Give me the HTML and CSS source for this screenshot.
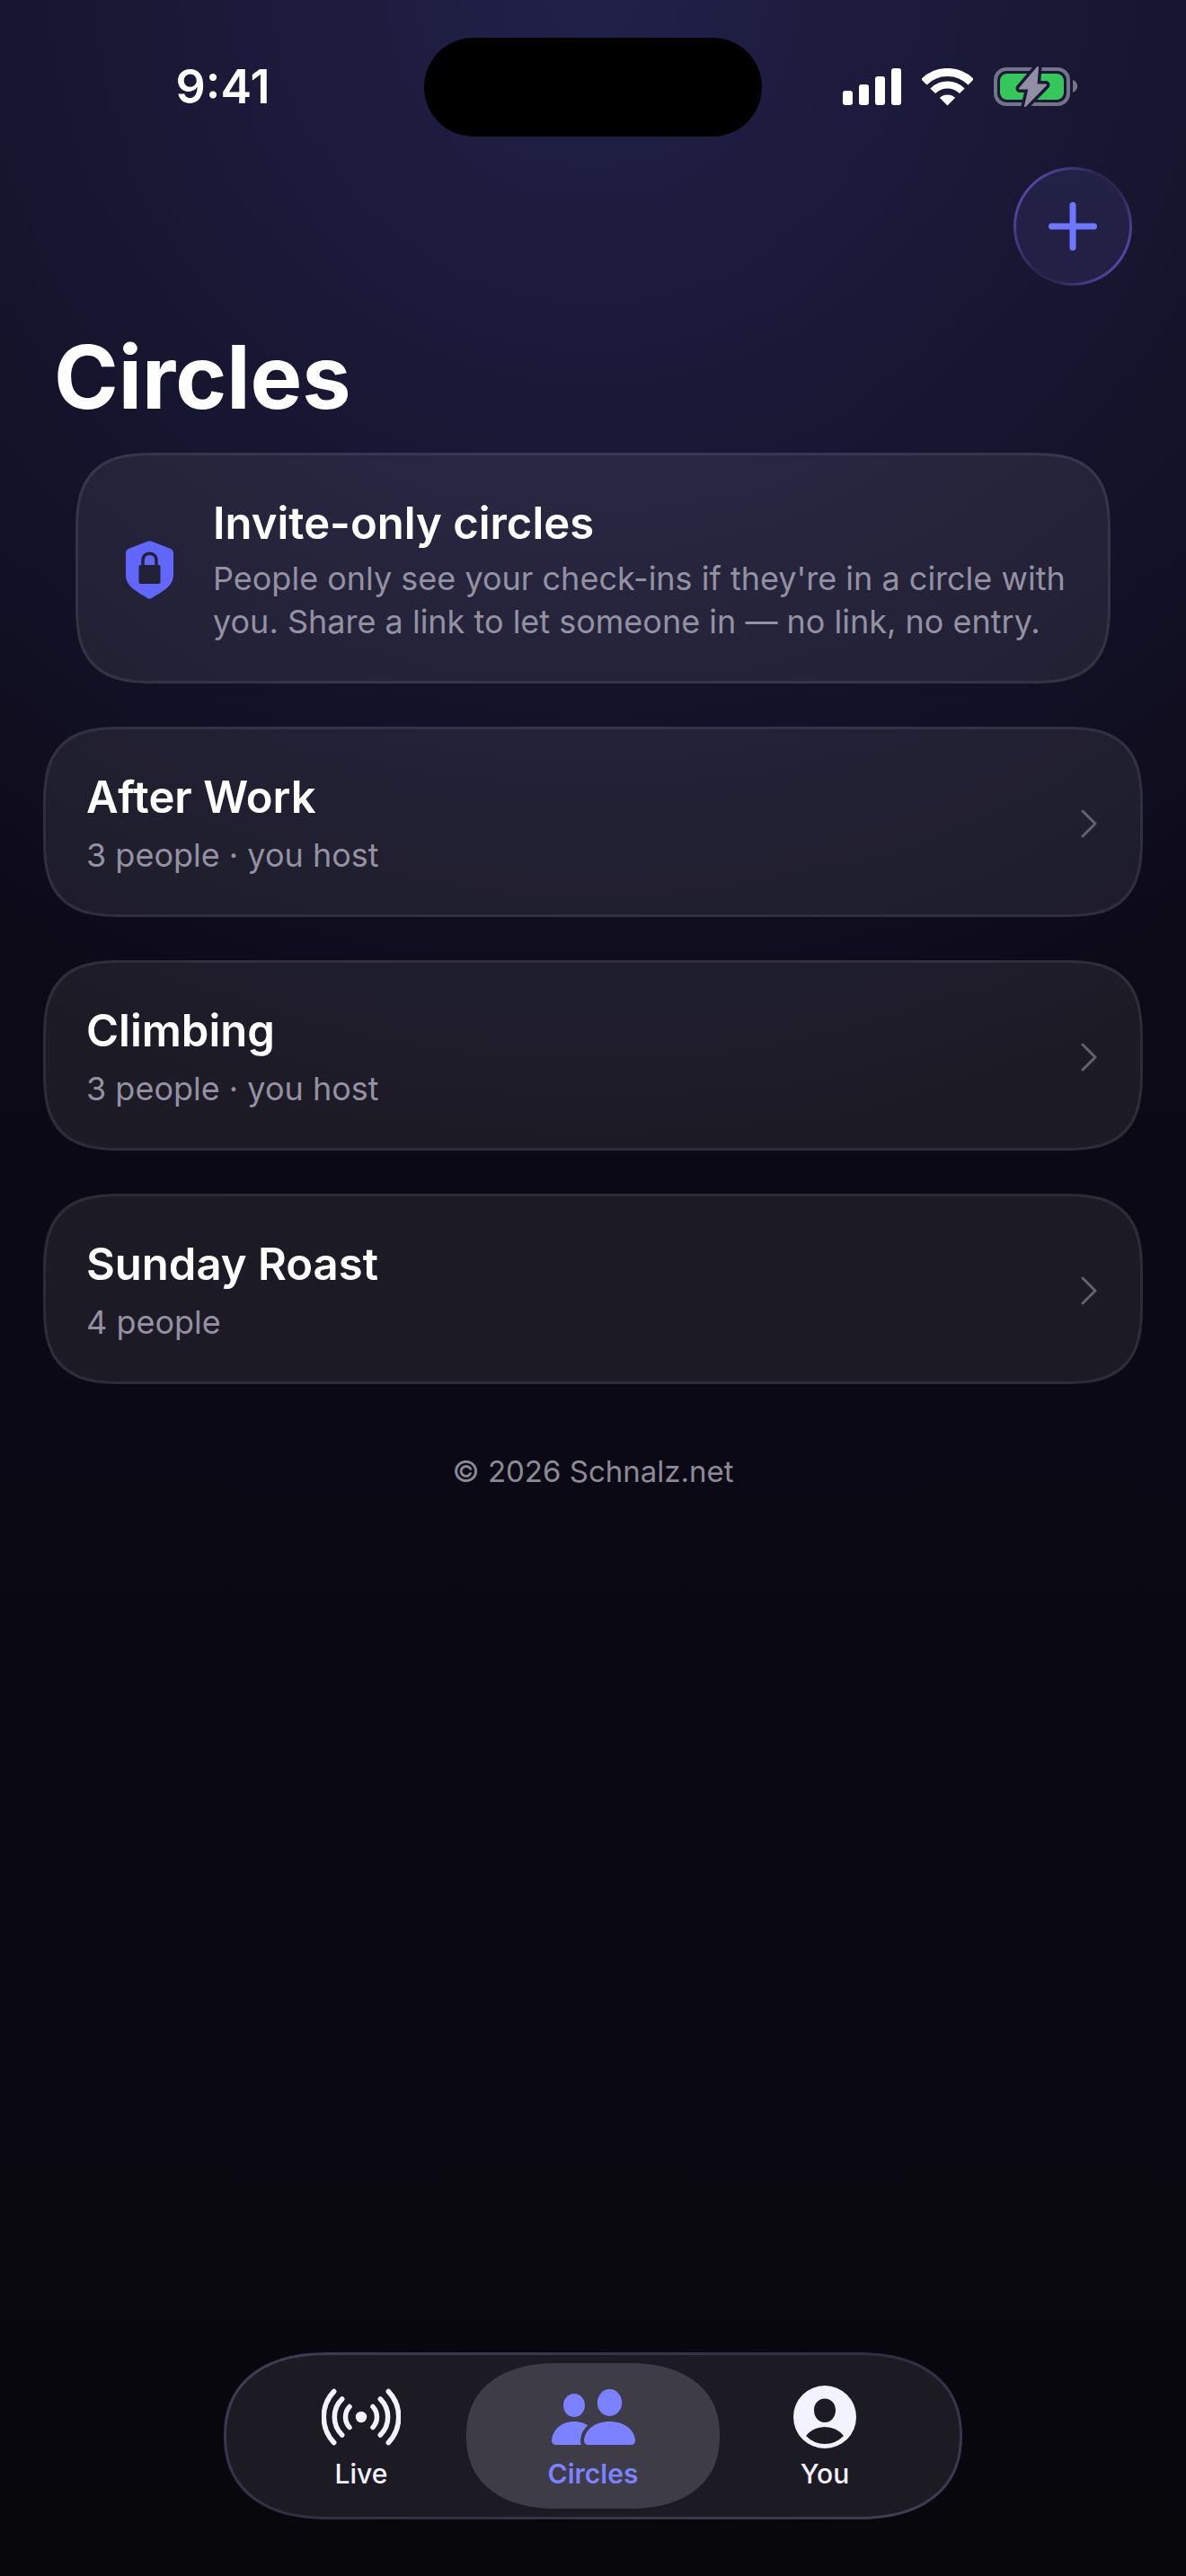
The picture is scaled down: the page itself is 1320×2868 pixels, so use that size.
FILE: index.html
```html
<!DOCTYPE html>
<html lang="en">

<head>
    <meta charset="UTF-8">
    <meta name="viewport" content="width=device-width, initial-scale=1.0">
    <title>Circles</title>
    <link rel="stylesheet" href="styles.css">
</head>

<body>
    <div class="status-bar">
        <div class="status-time">9:41</div>
        <div class="island"></div>
        <div class="status-icons">
            <svg class="signal" viewBox="0 0 65 42" aria-hidden="true">
                <rect x="0" y="25" width="11" height="16" rx="3" />
                <rect x="18" y="18" width="11" height="23" rx="3" />
                <rect x="36" y="9" width="11" height="32" rx="3" />
                <rect x="54" y="0" width="11" height="41" rx="3" />
            </svg>
            <svg class="wifi" viewBox="0 0 57 42" aria-hidden="true">
                <path d="M2.3 15.3A37 37 0 0 1 54.7 15.3" fill="none" stroke="#fff" stroke-width="9" />
                <path d="M12.2 25.2A23 23 0 0 1 44.8 25.2" fill="none" stroke="#fff" stroke-width="8" />
                <path d="M19.8 32.8A13 13 0 0 1 37.2 32.8L28.5 41.5Z" />
            </svg>
            <svg class="battery" viewBox="0 0 94 46" aria-hidden="true">
                <mask id="bolt-gap">
                    <rect width="94" height="46" fill="#fff" />
                    <path d="M49 1L29 24.500H39.500L35 44L58 20.500H47.500Z" fill="#000" stroke="#000" stroke-width="9" stroke-linejoin="round" />
                </mask>
                <g mask="url(#bolt-gap)">
                    <rect x="2" y="3" width="81" height="39" rx="12" fill="none" stroke="#757389" stroke-width="4" />
                    <rect x="7" y="8" width="71" height="29" rx="8" fill="#34c759" />
                </g>
                <path d="M49 1L29 24.500H39.500L35 44L58 20.500H47.500Z" fill="#918fa5" stroke="#918fa5" stroke-width="2" stroke-linejoin="round" />
                <path d="M88 15C95 18 95 26 88 29Z" fill="#757389" />
            </svg>
        </div>
    </div>

    <header class="header">
        <button class="add-button" aria-label="New circle">
            <svg viewBox="0 0 54 54" aria-hidden="true">
                <path d="M27 3.500V50.500M3.500 27H50.500" />
            </svg>
        </button>
        <h1>Circles</h1>
    </header>

    <main class="content">
        <section class="card info">
            <svg class="shield" viewBox="0 0 53 65" aria-hidden="true">
                <path d="M23.500 1Q26.500 -.500 29.500 1L50 9Q53 10.500 53 14V38C53 51 41 56 29 64Q26.500 65.500 24 64C12 56 0 51 0 38V14Q0 10.500 3 9Z" fill="#6067fa" />
                <path d="M19 28V22C19 11.500 34 11.500 34 22V28" fill="none" stroke="#232136" stroke-width="3.500" />
                <rect x="14.500" y="27" width="24" height="21" rx="2" fill="#232136" />
            </svg>
            <div>
                <h2>Invite-only circles</h2>
                <p>People only see your check-ins if they're in a circle with you. Share a link to let someone in — no link, no entry.</p>
            </div>
        </section>

        <a class="card circle" href="#after-work">
            <div>
                <h2>After Work</h2>
                <p>3 people · you host</p>
            </div>
            <svg class="chevron" viewBox="0 0 18 32" aria-hidden="true"><path d="M2 2L16 16L2 30" /></svg>
        </a>
        <a class="card circle" href="#climbing">
            <div>
                <h2>Climbing</h2>
                <p>3 people · you host</p>
            </div>
            <svg class="chevron" viewBox="0 0 18 32" aria-hidden="true"><path d="M2 2L16 16L2 30" /></svg>
        </a>
        <a class="card circle" href="#sunday-roast">
            <div>
                <h2>Sunday Roast</h2>
                <p>4 people</p>
            </div>
            <svg class="chevron" viewBox="0 0 18 32" aria-hidden="true"><path d="M2 2L16 16L2 30" /></svg>
        </a>
    </main>

    <footer class="copyright">© 2026 Schnalz.net</footer>

    <nav class="tab-bar">
        <a class="tab" href="#live">
            <svg class="live-icon" viewBox="0 0 88 70" aria-hidden="true">
                <circle cx="44" cy="35" r="6.200" />
                <g fill="none" stroke="#f3f2ff" stroke-width="5.500" stroke-linecap="round">
                    <path d="M31 23.500A17 17 0 0 0 31 46.500M57 23.500A17 17 0 0 1 57 46.500" />
                    <path d="M22.700 15A28 28 0 0 0 22.700 55M65.300 15A28 28 0 0 1 65.300 55" />
                    <path d="M13.700 6.500A41.300 41.300 0 0 0 13.700 63.500M74.300 6.500A41.300 41.300 0 0 1 74.300 63.500" />
                </g>
            </svg>
            <span>Live</span>
        </a>
        <a class="tab active" href="#circles" aria-current="page">
            <svg class="people-icon" viewBox="0 0 93 70" aria-hidden="true">
                <mask id="person-gap">
                    <rect width="93" height="70" fill="#fff" />
                    <path d="M41 66Q36 66 36 61C37 49 48 40 64.500 40S92 49 93 61Q93 66 88 66Z" fill="#000" stroke="#000" stroke-width="8" />
                </mask>
                <ellipse cx="25" cy="22" rx="12" ry="13" />
                <path d="M5 66Q0 66 0 61C1 49 11 40 25 40S49 49 50 61V66Z" mask="url(#person-gap)" />
                <ellipse cx="64.500" cy="19" rx="13.700" ry="15" />
                <path d="M41 66Q36 66 36 61C37 49 48 40 64.500 40S92 49 93 61Q93 66 88 66Z" />
            </svg>
            <span>Circles</span>
        </a>
        <a class="tab" href="#you">
            <svg class="you-icon" viewBox="0 0 70 70" aria-hidden="true">
                <path fill-rule="evenodd" d="M35 0A35 35 0 1 1 35 70A35 35 0 1 1 35 0ZM35 14.500C28 14.500 23 20 23 27.500S28 41 35 41S47 35 47 27.500S42 14.500 35 14.500ZM14 56Q23 65 35 65T56 56Q48 46 35 46T14 56Z" />
            </svg>
            <span>You</span>
        </a>
    </nav>
</body>

</html>
```

FILE: styles.css
```css
/* General Reset */
* {
    margin: 0;
    padding: 0;
    box-sizing: border-box;
}

body {
    font-family: 'Inter', 'Liberation Sans', sans-serif;
    display: flex;
    flex-direction: column;
    min-height: 100vh;
    color: #fff;
    background:
        radial-gradient(circle 1280px at 50% 0, rgba(99, 102, 241, 0.23), rgba(99, 102, 241, 0.13) 45%, transparent),
        linear-gradient(#0d0b16, #0b0915 55%, #07070c);
}

a {
    color: inherit;
    text-decoration: none;
}

/* Status bar */
.status-bar {
    display: grid;
    grid-template-columns: 1fr 376px 1fr;
    align-items: center;
    padding-top: 42px;
}

.status-time {
    padding-left: 24px;
    font-size: 52px;
    line-height: 60px;
    font-weight: 600;
    text-align: center;
}

.island {
    height: 110px;
    border-radius: 55px;
    background: #000;
}

.status-icons {
    display: flex;
    align-items: center;
    justify-content: center;
    gap: 23px;
    padding-right: 30px;
}

.status-icons svg {
    fill: #fff;
}

.signal {
    width: 65px;
    height: 42px;
}

.wifi {
    width: 57px;
    height: 42px;
}

.battery {
    width: 94px;
    height: 46px;
}

/* Header */
.header {
    display: flex;
    flex-direction: column;
    padding: 34px 60px 24px;
}

.header h1 {
    margin-top: 42px;
    font-size: 97px;
    line-height: 120px;
    font-weight: 700;
}

.add-button {
    align-self: flex-end;
    display: flex;
    align-items: center;
    justify-content: center;
    width: 132px;
    height: 132px;
    border: 3px solid transparent;
    border-radius: 50%;
    background:
        linear-gradient(#222146, #222044) padding-box,
        linear-gradient(125deg, #5045a0 15%, #29264f 45%, #29264f 60%, #5045a0 85%) border-box;
    cursor: pointer;
}

.add-button svg {
    width: 54px;
    height: 54px;
    stroke: #6e77ff;
    stroke-width: 7;
    stroke-linecap: round;
}

/* Cards */
.content {
    display: flex;
    flex-direction: column;
    gap: 48px;
    padding: 0 48px;
}

.card {
    display: flex;
    align-items: center;
    padding: 45px 48px 42px 45px;
    border: 3px solid rgba(255, 255, 255, 0.08);
    border-radius: 66px;
    background: rgba(255, 255, 255, 0.07);
}

.card h2 {
    font-size: 49px;
    line-height: 62px;
    font-weight: 600;
}

.card p {
    font-size: 36px;
    line-height: 48px;
    color: #9391a2;
}

.info {
    gap: 44px;
    margin: 0 36px;
    padding-left: 53px;
    padding-right: 36px;
}

.info p {
    margin-top: 6px;
}

.shield {
    flex: none;
    width: 53px;
    height: 65px;
}

.circle {
    justify-content: space-between;
}

.circle p {
    margin-top: 9px;
}

.chevron {
    width: 18px;
    height: 32px;
    fill: none;
    stroke: #62616d;
    stroke-width: 3;
    stroke-linecap: round;
    stroke-linejoin: round;
}

.copyright {
    margin-top: 76px;
    font-size: 33px;
    line-height: 42px;
    color: #8c8b95;
    text-align: center;
}

/* Tab bar */
.tab-bar {
    display: flex;
    align-self: center;
    margin: auto 0 63px;
    padding: 9px;
    border: 3px solid transparent;
    border-radius: 93px;
    background:
        linear-gradient(#1c1b24, #1c1b24) padding-box,
        linear-gradient(165deg, #403d56, #302e42 50%, #403d56) border-box;
}

.tab {
    display: flex;
    flex-direction: column;
    align-items: center;
    gap: 10px;
    width: 282px;
    height: 162px;
    padding-top: 25px;
    border-radius: 81px;
    font-size: 30px;
    line-height: 36px;
    font-weight: 500;
    color: #f3f2ff;
}

.tab + .tab {
    margin-left: -24px;
}

.tab svg {
    height: 70px;
    fill: currentColor;
}

.tab.active {
    color: #7b81ff;
    background: #3d3c47;
    font-weight: 600;
}

.live-icon {
    width: 88px;
}

.people-icon {
    width: 93px;
}

.you-icon {
    width: 70px;
}

/* Smoother corners where the browser can draw them */
@supports (corner-shape: superellipse(1.5)) {
    .card {
        border-radius: 90px;
        corner-shape: superellipse(1.5);
    }

    .tab-bar {
        border-radius: 116px / 93px;
        corner-shape: superellipse(1.2);
    }

    .tab.active {
        border-radius: 102px / 81px;
        corner-shape: superellipse(1.2);
    }
}
```
